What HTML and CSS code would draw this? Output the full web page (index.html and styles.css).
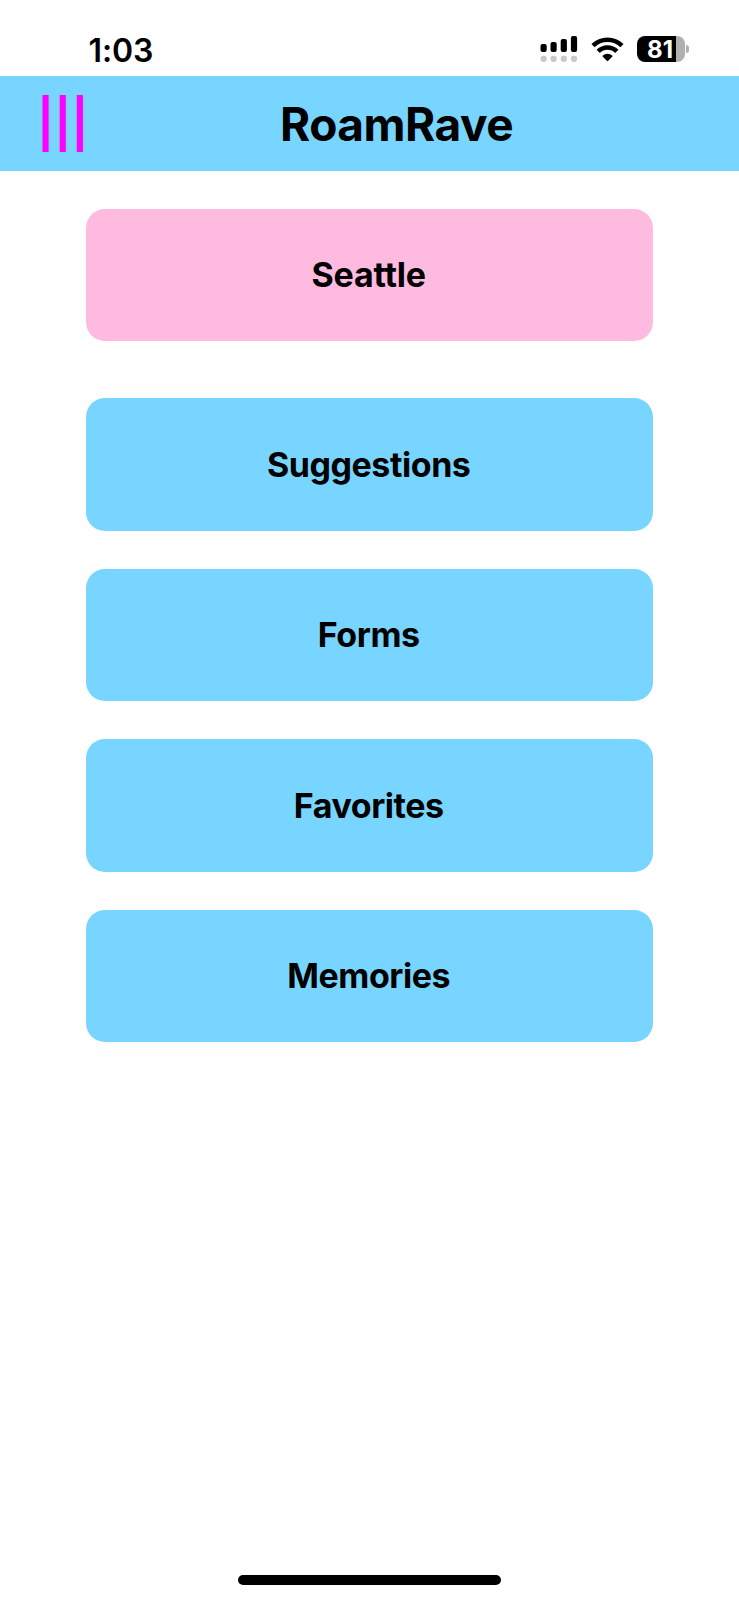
FILE: index.html
```html
<!DOCTYPE html>
<html lang="en">
<head>
<meta charset="utf-8">
<title>RoamRave</title>
<link rel="stylesheet" href="styles.css">
</head>
<body>
<div class="screen">
  <div class="status">
    <span class="time">1:03</span>
    <div class="indicators">
      <svg class="signal" width="38" height="28" viewBox="0 0 38 28">
        <rect x=".5" y="9" width="6.2" height="8" rx="2"/>
        <rect x="10.5" y="7" width="6.2" height="10" rx="2"/>
        <rect x="20.7" y="4" width="6.2" height="13" rx="2"/>
        <rect x="30.9" y="1" width="6.2" height="16" rx="2"/>
        <g fill="#c9c9c9">
          <rect x=".5" y="20.7" width="6.2" height="6.2" rx="2.4"/>
          <rect x="10.5" y="20.7" width="6.2" height="6.2" rx="2.4"/>
          <rect x="20.7" y="20.7" width="6.2" height="6.2" rx="2.4"/>
          <rect x="30.9" y="20.7" width="6.2" height="6.2" rx="2.4"/>
        </g>
      </svg>
      <svg class="wifi" width="33" height="25" viewBox="0 0 33 25">
        <g fill="none" stroke="#000" stroke-width="4.6">
          <path d="M2 8.6a20.8 20.8 0 0 1 29 0"/>
          <path d="M7.2 14.3a13.2 13.2 0 0 1 18.6 0"/>
        </g>
        <path d="M11.8 18.5a7.2 7.2 0 0 1 9.4 0q.6.6 0 1.2l-4 4.1q-.7.6-1.4 0l-4-4.1q-.6-.6 0-1.2z"/>
      </svg>
      <div class="battery"><span class="level">81</span></div>
      <span class="nub"></span>
    </div>
  </div>
  <header class="header">
    <svg class="menu" width="42" height="57" viewBox="0 0 42 57" fill="#f0f">
      <rect x=".5" width="6.1" height="57"/>
      <rect x="17.7" width="6.1" height="57"/>
      <rect x="34.8" width="6.1" height="57"/>
    </svg>
    <h1 class="title">RoamRave</h1>
  </header>
  <main class="cards">
    <div class="card city"><span>Seattle</span></div>
    <div class="card"><span>Suggestions</span></div>
    <div class="card"><span>Forms</span></div>
    <div class="card"><span>Favorites</span></div>
    <div class="card"><span>Memories</span></div>
  </main>
  <div class="home"></div>
</div>
</body>
</html>
```
FILE: styles.css
```css
* { box-sizing: border-box; }
body {
  margin: 0;
  background: #fff;
  color: #000;
  font-family: Inter, "Liberation Sans", sans-serif;
}
.screen {
  width: 739px;
  height: 1600px;
  display: flex;
  flex-direction: column;
  overflow: hidden;
}
.status {
  height: 76px;
  padding: 35px 50px 0 88.5px;
  display: flex;
  justify-content: space-between;
}
.time {
  font-size: 32px;
  font-weight: 600;
  line-height: 31px;
  letter-spacing: -.1px;
}
.indicators { display: flex; height: 28px; }
.wifi { margin: 2px 0 0 12.5px; }
.battery {
  width: 48px;
  height: 26px;
  margin: 1px 0 0 13.5px;
  border-radius: 8px;
  background: linear-gradient(90deg, #000 39px, #b0b0b0 39px);
}
.level {
  display: block;
  color: #fff;
  padding-right: 2px;
  font-size: 24px;
  font-weight: 700;
  line-height: 28px;
  text-align: center;
}
.nub {
  width: 3px;
  height: 8px;
  margin: 10px 0 0 1px;
  border-radius: 0 3px 3px 0;
  background: #b0b0b0;
}
.header {
  height: 94.6px;
  flex: none;
  background: #78d5ff;
  display: flex;
  padding: 19px 0 0 42px;
}
.menu { margin-right: 196px; }
.title {
  margin: 0;
  font-size: 46px;
  font-weight: 700;
  line-height: 58px;
  letter-spacing: -.5px;
}
.cards {
  padding: 38.2px 85.6px 0;
  display: flex;
  flex-direction: column;
  gap: 38.2px;
}
.card {
  height: 132.4px;
  padding: 0 1.6px .4px 0;
  border-radius: 19px;
  background: #78d5ff;
  display: flex;
  align-items: center;
  justify-content: center;
  font-size: 34px;
  font-weight: 650;
  font-variant-ligatures: none;
  letter-spacing: -.45px;
}
.city {
  background: #ffbadf;
  margin-bottom: 18.8px;
  padding-bottom: 1.4px;
  letter-spacing: -.2px;
}
.home {
  width: 263.4px;
  height: 10px;
  margin: auto auto 15px 238px;
  border-radius: 5px;
  background: #000;
}
```
